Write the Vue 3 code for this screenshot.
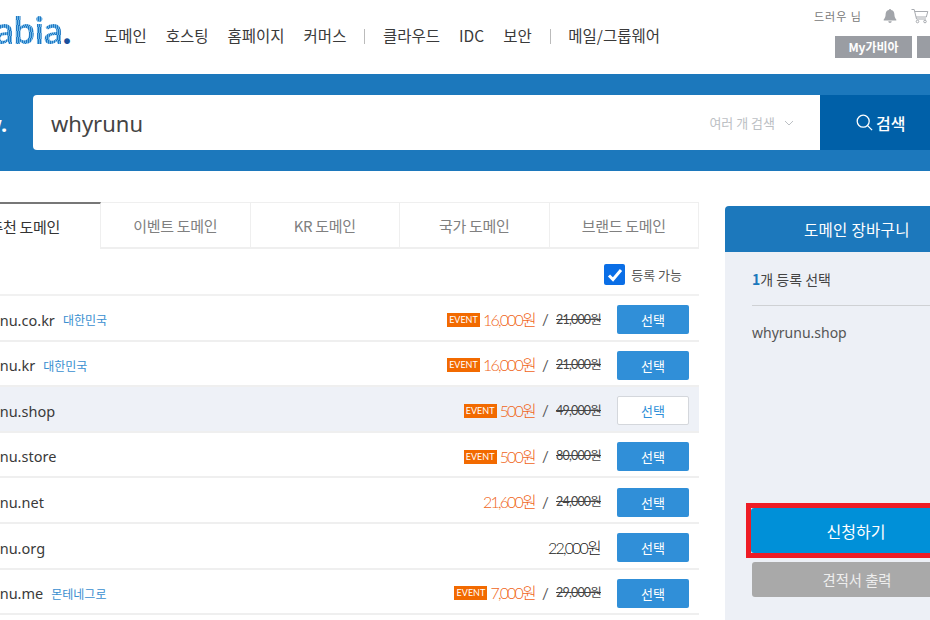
<script setup>
const navA = ['도메인', '호스팅', '홈페이지', '커머스']
const navB = ['클라우드', 'IDC', '보안']
const tabs = ['이벤트 도메인', 'KR 도메인', '국가 도메인', '브랜드 도메인']
const rows = [
  { name: 'whyrunu.co.kr', tag: '대한민국', event: true, price: '16,000원', old: '21,000원' },
  { name: 'whyrunu.kr', tag: '대한민국', event: true, price: '16,000원', old: '21,000원' },
  { name: 'whyrunu.shop', event: true, price: '500원', old: '49,000원', picked: true },
  { name: 'whyrunu.store', event: true, price: '500원', old: '80,000원' },
  { name: 'whyrunu.net', price: '21,600원', old: '24,000원' },
  { name: 'whyrunu.org', price: '22,000원', plain: true },
  { name: 'whyrunu.me', tag: '몬테네그로', event: true, price: '7,000원', old: '29,000원' }
]
</script>

<template>
  <div class="page">
    <header class="top">
      <div class="logo"><span class="logo-word">abia</span><span class="logo-dot">.</span></div>
      <nav class="nav">
        <a v-for="n in navA" :key="n">{{ n }}</a>
        <i class="sep"></i>
        <a v-for="n in navB" :key="n">{{ n }}</a>
        <i class="sep"></i>
        <a>메일/그룹웨어</a>
      </nav>
      <div class="account">
        <div class="user">
          <span class="user-name">드러우 님</span>
          <svg class="ico" width="16" height="16" viewBox="0 0 16 16"><path fill="#a2a5aa" d="M8 1c.7 0 1.100.4 1.200 1 2.200.5 3.200 2.300 3.200 4.600 0 2.400.7 3.600 1.900 4.800v1H1.700v-1c1.200-1.200 1.900-2.400 1.900-4.800 0-2.300 1-4.100 3.200-4.600C6.900 1.400 7.300 1 8 1zM6.300 13.300h3.400C9.600 14.400 9 15 8 15s-1.600-.6-1.700-1.700z"/></svg>
          <svg class="ico cart" width="18" height="16" viewBox="0 0 18 16" fill="none" stroke="#a8abb0" stroke-width="1"><path d="M.5 1.500h2.700l2.300 9.500h9.500M3.800 3.500h13l-1.500 5.500H5"/><circle cx="6.500" cy="13.500" r="1.300"/><circle cx="14" cy="13.500" r="1.300"/></svg>
        </div>
        <div class="acct-btns">
          <a class="acct-btn">My가비아</a>
          <a class="acct-btn"></a>
        </div>
      </div>
    </header>

    <section class="band">
      <span class="band-mark">w.</span>
      <div class="search">
        <div class="field">
          <span class="query">whyrunu</span>
          <span class="multi">여러 개 검색</span>
          <svg width="10" height="6" viewBox="0 0 10 6" fill="none" stroke="#bcc0c4" stroke-width="1"><path d="M1 1l4 4 4-4"/></svg>
        </div>
        <button class="go">
          <svg width="17" height="17" viewBox="0 0 17 17" fill="none" stroke="#fff" stroke-width="1.300"><circle cx="7.200" cy="7.200" r="6"/><path d="M11.600 11.600l4.500 4.500"/></svg>
          <span>검색</span>
        </button>
      </div>
    </section>

    <main class="content">
      <div class="left">
        <div class="tabs">
          <div class="tab active"><span>추천 도메인</span></div>
          <div v-for="t in tabs" :key="t" class="tab">{{ t }}</div>
        </div>
        <div class="filter">
          <span class="check">
            <svg width="16" height="14" viewBox="0 0 16 14" fill="none" stroke="#fff" stroke-width="3"><path d="M2 7.500l4 4 8-9.500"/></svg>
          </span>
          <span>등록 가능</span>
        </div>
        <div v-for="r in rows" :key="r.name" class="row" :class="{ picked: r.picked }">
          <span class="name">{{ r.name }}</span>
          <span v-if="r.tag" class="tag">{{ r.tag }}</span>
          <span class="spacer"></span>
          <span v-if="r.event" class="event">EVENT</span>
          <span class="price" :class="{ plain: r.plain }">{{ r.price }}</span>
          <span v-if="r.old" class="slash">/</span>
          <span v-if="r.old" class="old">{{ r.old }}</span>
          <button class="pick">선택</button>
        </div>
      </div>

      <aside class="cart-panel">
        <h2 class="cart-title">도메인 장바구니</h2>
        <div class="cart-body">
          <p class="count"><b>1</b>개 등록 선택</p>
          <p class="picked-name">whyrunu.shop</p>
          <div class="actions">
            <div class="mark"><button class="apply">신청하기</button></div>
            <button class="quote">견적서 출력</button>
          </div>
        </div>
      </aside>
    </main>
  </div>
</template>

<style>
html, body { margin: 0; background: #fff; overflow: hidden; }
</style>

<style scoped>
.page {
  width: 930px;
  height: 620px;
  overflow: hidden;
  font-family: "Noto Sans CJK KR", "Noto Sans", sans-serif;
  color: #333;
  background: #fff;
}
button { font-family: inherit; border: 0; padding: 0; }

.top { height: 74px; display: flex; position: relative; }
.logo {
  width: 71px;
  flex: none;
  height: 74px;
  display: flex;
  justify-content: flex-end;
  align-items: flex-start;
  padding-top: 9px;
  box-sizing: border-box;
  overflow: hidden;
  font: 700 38px/40px Lato, sans-serif;
  letter-spacing: -0.500px;
}
.logo-word {
  flex: none;
  background: repeating-linear-gradient(100deg, #1f78c4 0 1px, #6cb4e4 1px 2px);
  -webkit-background-clip: text;
  background-clip: text;
  color: transparent;
  white-space: nowrap;
}
.logo-dot { color: #1b4f9c; }

.nav {
  margin-left: 33px;
  height: 70px;
  display: flex;
  align-items: center;
  gap: 19px;
  font-size: 15.500px;
  color: #3a3a3a;
  white-space: nowrap;
}
.sep { width: 1px; height: 15px; background: #bbb; margin: 2px -1.200px 0; }

.account { margin-left: auto; padding-top: 6px; flex: none; width: 116px; margin-right: -21px; }
.user { height: 20px; display: flex; align-items: center; font-size: 11px; color: #777; margin-left: -21px; }
.user-name { width: 48px; letter-spacing: 1px; white-space: nowrap; }
.ico { margin-left: 20px; flex: none; }
.cart { margin-left: 13px; }
.acct-btns { display: flex; gap: 5px; margin-top: 10px; margin-left: 0; }
.acct-btn {
  flex: none;
  width: 77px;
  height: 22px;
  background: #9a9da3;
  color: #fff;
  font-size: 12px;
  font-weight: 700;
  line-height: 22px;
  text-align: center;
}

.band { height: 97px; background: #1c78bc; display: flex; align-items: center; padding-left: 0; }
.band-mark { width: 33px; flex: none; color: #fff; font: 700 22px/1 "Noto Sans", sans-serif; text-indent: -17px; white-space: nowrap; }
.search { display: flex; flex: none; height: 55px; width: 897px; }
.field {
  width: 787px;
  box-sizing: border-box;
  background: #fff;
  border-radius: 4px 0 0 4px;
  display: flex;
  align-items: center;
  padding: 0 26px 0 18px;
}
.query { font: 22px/1 "Noto Sans", sans-serif; color: #444; flex: 1; }
.multi { font-size: 13px; color: #bcc0c4; margin-right: 9px; }
.go {
  flex: 1;
  background: #0060a8;
  color: #fff;
  display: flex;
  align-items: center;
  padding-left: 36px;
  gap: 3px;
  font-size: 16px;
  font-weight: 500;
}

.content { display: flex; padding-top: 31px; gap: 26px; }
.left { width: 699px; flex: none; }

.tabs { display: flex; height: 47px; }
.tab {
  width: 149.500px;
  box-sizing: border-box;
  border: 1px solid #efefef;
  border-left: 0;
  border-bottom-width: 2px;
  color: #808080;
  font-size: 15px;
  letter-spacing: -0.300px;
  display: flex;
  align-items: center;
  justify-content: center;
}
.tab.active {
  width: 101px;
  border: 0;
  border-top: 2px solid #777;
  border-right: 1px solid #efefef;
  color: #333;
  justify-content: flex-end;
  padding-right: 40px;
  overflow: hidden;
  white-space: nowrap;
}
.tab.active span { flex: none; }

.filter {
  height: 47px;
  box-sizing: border-box;
  border-bottom: 2px solid #f1f1f1;
  display: flex;
  align-items: center;
  justify-content: flex-end;
  gap: 6px;
  padding: 6px 17px 0 0;
  font-size: 13px;
  color: #555;
}
.check {
  width: 21px;
  height: 21px;
  background: #0a6ee6;
  border-radius: 2px;
  display: flex;
  align-items: center;
  justify-content: center;
}

.row {
  height: 45.600px;
  box-sizing: border-box;
  border-bottom: 2px solid #efefef;
  display: flex;
  align-items: center;
  padding: 4px 10px 0 0;
  white-space: nowrap;
}
.row.picked { background: #eef1f7; }
.name { margin-left: -43px; font: 14.500px/1 "Noto Sans", sans-serif; color: #3a3a3a; }
.tag { margin-left: 8px; font-size: 12px; color: #3a8fd0; }
.spacer { flex: 1; }
.event {
  background: #f26a00;
  color: #fff;
  font: 9px/14px Lato, sans-serif;
  width: 33px;
  text-align: center;
  margin-right: 3px;
}
.price { font: 300 16px/1 Lato, "Noto Sans CJK KR", sans-serif; color: #f0661a; letter-spacing: -1.800px; }
.price.plain { color: #222; }
.slash { width: 21px; text-align: center; font: 15px/1 Lato, sans-serif; color: #555; }
.old {
  width: 44px;
  font: 12.500px/1 Lato, "Noto Sans CJK KR", sans-serif;
  letter-spacing: -0.800px;
  color: #444;
  text-decoration: line-through;
  text-align: right;
}
.pick {
  margin-left: 17px;
  width: 72px;
  height: 29px;
  background: #308fd8;
  color: #fff;
  border-radius: 2px;
  font-size: 13px;
}
.row.picked .pick { background: #fff; color: #308fd8; border: 1px solid #d4d7dc; }

.cart-panel { width: 300px; flex: none; margin-top: 4px; height: 414px; display: flex; flex-direction: column; }
.cart-title {
  margin: 0;
  height: 46px;
  background: #1c78bc;
  color: #fff;
  border-radius: 4px 0 0 0;
  font-size: 15.500px;
  font-weight: 400;
  letter-spacing: 0.300px;
  line-height: 46px;
  padding-left: 79px;
}
.cart-body { flex: 1; background: #edf0f6; display: flex; flex-direction: column; padding-left: 27px; }
.count {
  margin: 0;
  height: 53px;
  line-height: 54px;
  width: 190px;
  border-bottom: 1px solid #cfd1d4;
  font-size: 14px;
  color: #444;
}
.count b { color: #1c78bc; }
.picked-name { margin: 15px 0 0; font: 14px/24px "Noto Sans", sans-serif; color: #555; }
.actions { margin-top: 158px; }
.mark { margin-left: -6px; width: 300px; height: 55px; box-sizing: border-box; border: 5px solid #ee1c25; }
.apply {
  display: block;
  width: 210px;
  height: 45px;
  background: #0090d8;
  color: #fff;
  border-radius: 3px;
  font-size: 16px;
}
.quote {
  display: block;
  margin-top: 4px;
  width: 210px;
  height: 35px;
  line-height: 33px;
  background: #a9a9a9;
  color: #eee;
  border-radius: 3px;
  font-size: 14.300px;
}
</style>
